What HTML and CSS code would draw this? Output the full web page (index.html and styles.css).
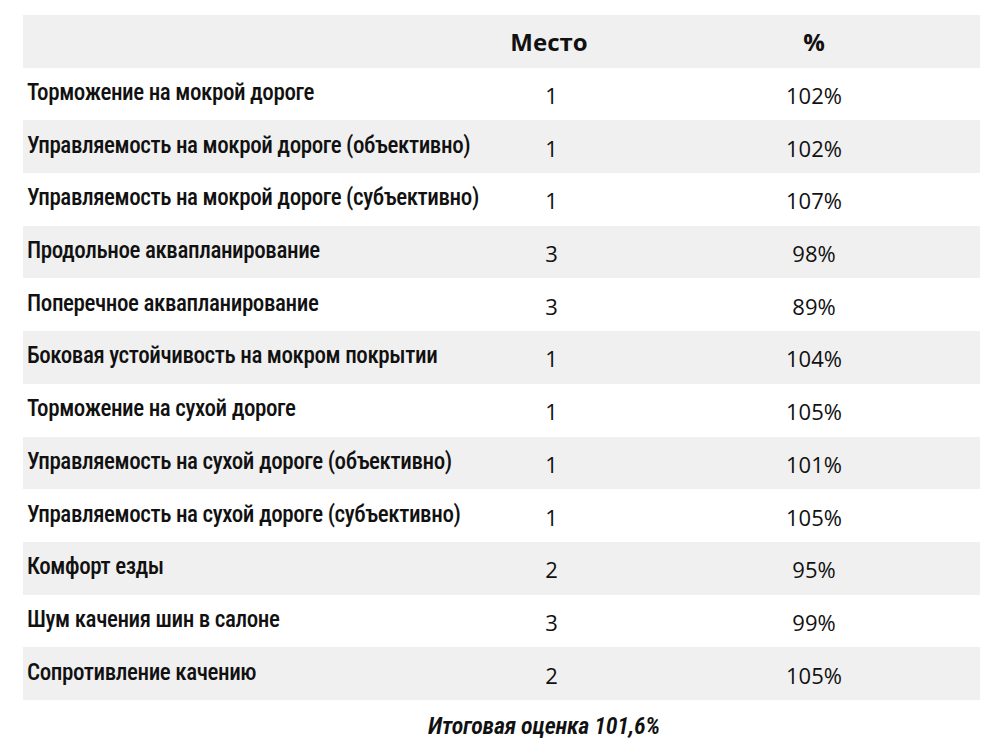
FILE: index.html
```html
<!DOCTYPE html>
<html lang="ru"><head><meta charset="utf-8"><title>Результаты теста</title><link rel="stylesheet" href="styles.css"></head>
<body>
<div class="results">
  <div class="row head"><div class="name"></div><div class="place">Место</div><div class="pct">%</div></div>
  <div class="row"><div class="name">Торможение на мокрой дороге</div><div class="place">1</div><div class="pct">102%</div></div>
  <div class="row alt"><div class="name">Управляемость на мокрой дороге (объективно)</div><div class="place">1</div><div class="pct">102%</div></div>
  <div class="row"><div class="name">Управляемость на мокрой дороге (субъективно)</div><div class="place">1</div><div class="pct">107%</div></div>
  <div class="row alt"><div class="name">Продольное аквапланирование</div><div class="place">3</div><div class="pct">98%</div></div>
  <div class="row"><div class="name">Поперечное аквапланирование</div><div class="place">3</div><div class="pct">89%</div></div>
  <div class="row alt"><div class="name">Боковая устойчивость на мокром покрытии</div><div class="place">1</div><div class="pct">104%</div></div>
  <div class="row"><div class="name">Торможение на сухой дороге</div><div class="place">1</div><div class="pct">105%</div></div>
  <div class="row alt"><div class="name">Управляемость на сухой дороге (объективно)</div><div class="place">1</div><div class="pct">101%</div></div>
  <div class="row"><div class="name">Управляемость на сухой дороге (субъективно)</div><div class="place">1</div><div class="pct">105%</div></div>
  <div class="row alt"><div class="name">Комфорт езды</div><div class="place">2</div><div class="pct">95%</div></div>
  <div class="row"><div class="name">Шум качения шин в салоне</div><div class="place">3</div><div class="pct">99%</div></div>
  <div class="row alt"><div class="name">Сопротивление качению</div><div class="place">2</div><div class="pct">105%</div></div>
</div>
<div class="total">Итоговая оценка 101,6%</div>
</body></html>
```
FILE: styles.css
```css
html, body { background: #ffffff; }
body { margin: 0; padding: 15px 0 0 23px; color: #111111; }
.results { width: 957px; display: flex; flex-direction: column; }
.row { display: grid; grid-template-columns: 447px 160px 1fr; align-items: center; height: 52.7px; }
.head, .alt { background: #f0f0f0; }
.name { font-family: Roboto, "Liberation Sans", sans-serif; font-stretch: 75%; font-weight: 500; font-size: 23px; letter-spacing: -0.4px; padding-left: 4px; white-space: nowrap; padding-bottom: 3px; }
.place, .pct { font-family: "Open Sans", "Liberation Sans", sans-serif; font-size: 22px; text-align: center; padding-top: 2px; }
.place { padding-left: 3px; }
.pct { padding-left: 18px; }
.head .place, .head .pct { font-weight: 700; font-size: 24px; padding-top: 0; }
.head .place { padding-left: 0; padding-right: 2px; }
.total { font-family: Roboto, "Liberation Sans", sans-serif; font-stretch: 75%; font-style: italic; font-weight: 600; font-size: 24px; letter-spacing: -0.25px; padding-left: 405px; margin-top: 12px; }
```
